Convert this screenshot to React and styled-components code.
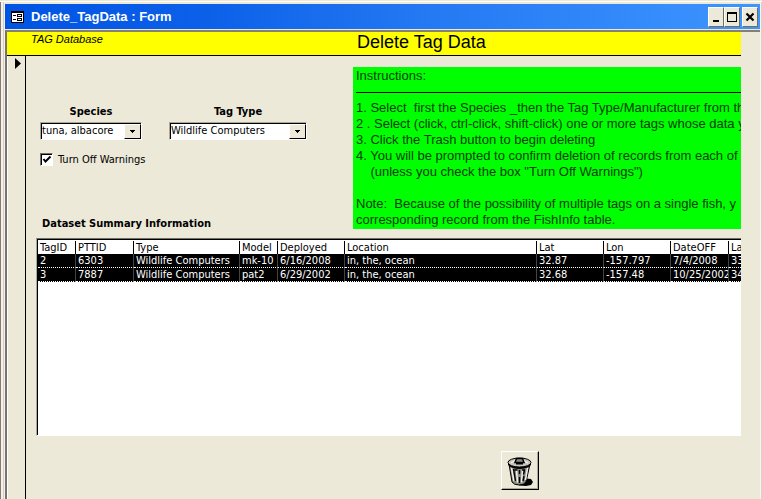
import React, { useState } from "react";
import styled, { createGlobalStyle } from "styled-components";

const Global = createGlobalStyle`
  * { box-sizing: border-box; }
  html, body, #root { margin: 0; height: 100%; }
  body { background: #ece9d8; overflow: hidden; }
`;

const ui = `"DejaVu Sans Condensed", "DejaVu Sans", sans-serif`;

const Window = styled.main`
  height: 100vh;
  display: flex;
  flex-direction: column;
  padding: 3px 2px 0 5px;
  background: linear-gradient(90deg, #857a6e 1px, #f6f0ea 1px 3px, #d6cdc2 3px 4px, #f4f1e8 4px 5px, #ece9d8 5px);
  border-top: 1px solid #ece9d8;
  box-shadow: inset 0 1px #fffdf6, inset -1px 0 #d8d3c4, inset -2px 0 #f6f4ec;
  color: #000;
  font: 11px/13px ${ui};
`;

const TitleBar = styled.header`
  display: flex;
  align-items: center;
  height: 25px;
  flex: none;
  padding: 0 2px 0 6px;
  background: linear-gradient(90deg, #0054e3, #0b5fe8 25%, #2478f2 55%, #3d95ff);
`;

const WindowTitle = styled.h1`
  margin: 0 auto 0 7px;
  font: bold 13px/16px "Liberation Sans", sans-serif;
  color: #fff;
  white-space: pre;
`;

const Caption = styled.button`
  width: 16px;
  height: 20px;
  padding: 0;
  margin-left: ${(p) => (p.$apart ? "2px" : "0")};
  border: 1px solid;
  border-color: #fff #716f64 #716f64 #fff;
  background: #ece9d8;
  display: grid;
  place-items: center;
`;

const Client = styled.section`
  flex: 1;
  display: flex;
  flex-direction: column;
  min-height: 0;
  margin-top: 1px;
  padding-right: 19px;
  border-top: 2px solid #858073;
  border-left: 2px solid #76746a;
  background: #ece9d8;
`;

const FormHeader = styled.header`
  display: grid;
  grid-template-columns: 326px 1fr;
  height: 24px;
  flex: none;
  padding-left: 24px;
  background: #ff0;
  border-bottom: 1px solid #000;
`;

const Brand = styled.span`
  font: italic 11px/15px "Liberation Sans", sans-serif;
`;

const FormTitle = styled.h2`
  margin: 0;
  font: 18px/21px "Liberation Sans", sans-serif;
`;

const Record = styled.div`
  flex: 1;
  display: flex;
  min-height: 0;
`;

const Selector = styled.div`
  width: 19px;
  flex: none;
  border-right: 1px solid #000;
  border-left: 1px solid #fff;
  padding: 2px 0 0 7px;
`;

const Detail = styled.div`
  flex: 1;
  min-width: 0;
  padding: 11px 0 0 11px;
`;

const Top = styled.div`
  display: grid;
  grid-template-columns: 316px minmax(0, 1fr);
  height: 171px;
`;

const Controls = styled.div`
  padding: 38px 0 0 3px;
`;

const Fields = styled.div`
  display: flex;
  gap: 27px;
`;

const Field = styled.label`
  display: grid;
  gap: 4px;
  width: ${(p) => p.$width};
  font-weight: bold;
  text-align: center;
`;

const Combo = styled.span`
  display: grid;
  grid-template-columns: minmax(0, 1fr) 17px;
  height: 18px;
  border: 1px solid;
  border-color: #aca899 #fff #fff #aca899;
  background: #fff;
  box-shadow: inset 1px 1px #000;
`;

const Select = styled.select`
  grid-area: 1 / 1 / 2 / 3;
  appearance: none;
  border: 0;
  padding: 0 18px 0 1px;
  margin: 0;
  background: transparent;
  font: 11px/16px ${ui};
  color: #000;
`;

const Arrow = styled.span`
  grid-area: 1 / 2;
  display: grid;
  place-items: center;
  margin-top: 1px;
  background: #ece9d8;
  border: 1px solid;
  border-color: #fff #000 #000 #fff;
  pointer-events: none;
`;

const Check = styled.label`
  display: flex;
  align-items: center;
  gap: 5px;
  margin-top: 13px;
`;

const Box = styled.input`
  appearance: none;
  width: 13px;
  height: 13px;
  margin: 0;
  border: 1px solid;
  border-color: #716f64 #fff #fff #716f64;
  box-shadow: inset 1px 1px #000;
  background: #fff;
  &:checked {
    background: #fff url("data:image/svg+xml,%3Csvg xmlns='http://www.w3.org/2000/svg' viewBox='0 0 11 11'%3E%3Cpath d='M2.5 5l2 2.5 5-5' fill='none' stroke='%23000' stroke-width='2'/%3E%3C/svg%3E");
  }
`;

const Heading = styled.h3`
  margin: 51px 0 0 2px;
  font: bold 11px/13px ${ui};
`;

const Notice = styled.section`
  height: 162px;
  padding: 1px 0 0 3px;
  overflow: hidden;
  background: #0f0;
  color: #063c06;
  font: 13px/16px "Liberation Sans", sans-serif;
`;

const Line = styled.p`
  margin: 0;
  min-height: 16px;
  white-space: pre;
`;

const Rule = styled.hr`
  margin: 8px 0 7px;
  border: 0;
  border-top: 1px solid #000;
`;

const List = styled.div`
  height: 198px;
  margin-left: -1px;
  overflow: hidden;
  background: #fff;
  border-top: 1px solid #716f64;
  border-left: 1px solid #aca899;
  border-bottom: 1px solid #fff;
  box-shadow: inset 1px 1px #000;
  padding: 2px 0 0 1px;
`;

const Table = styled.table`
  table-layout: fixed;
  width: 100%;
  border-collapse: separate;
  border-spacing: 0;
`;

const Th = styled.th`
  width: ${(p) => p.$width};
  height: 13px;
  padding: 0 0 0 2px;
  border-right: 1px solid #000;
  font-weight: normal;
  text-align: left;
  line-height: 13px;
  overflow: hidden;
  &:last-child { border-right: 0; }
`;

const Td = styled.td`
  height: 14px;
  padding: 0 0 0 2px;
  overflow: hidden;
  background: #000;
  color: #fff;
  border-right: 1px solid #444;
  border-bottom: 1px dotted #fff;
  line-height: 13px;
  white-space: nowrap;
  &:last-child { border-right: 0; }
`;

const Footer = styled.footer`
  display: flex;
  padding: 15px 0 0 464px;
`;

const Trash = styled.button`
  width: 38px;
  height: 39px;
  padding: 0;
  display: grid;
  place-items: center;
  background: #ece9d8;
  border: 1px solid;
  border-color: #fff #000 #000 #fff;
  box-shadow: inset -1px -1px #aca899;
`;

const columns = [
  ["TagID", "38px"], ["PTTID", "58px"], ["Type", "106px"], ["Model", "38px"], ["Deployed", "67px"],
  ["Location", "192px"], ["Lat", "67px"], ["Lon", "67px"], ["DateOFF", "58px"], ["La", "auto"],
];

const rows = [
  ["2", "6303", "Wildlife Computers", "mk-10", "6/16/2008", "in, the, ocean", "32.87", "-157.797", "7/4/2008", "33"],
  ["3", "7887", "Wildlife Computers", "pat2", "6/29/2002", "in, the, ocean", "32.68", "-157.48", "10/25/2002", "34"],
];

const instructions = [
  "1. Select  first the Species _then the Tag Type/Manufacturer from th",
  "2 . Select (click, ctrl-click, shift-click) one or more tags whose data y",
  "3. Click the Trash button to begin deleting",
  "4. You will be prompted to confirm deletion of records from each of",
  "    (unless you check the box \"Turn Off Warnings\")",
  "",
  "Note:  Because of the possibility of multiple tags on a single fish, y",
  "corresponding record from the FishInfo table.",
];

function FormIcon() {
  return (
    <svg width="13" height="12" viewBox="0 0 13 12" shapeRendering="crispEdges" aria-hidden="true">
      <path fill="#000" d="M0 0h13v12H0z" />
      <path fill="#fff" d="M1 2h11v9H1z" />
      <path fill="#000" d="M2 4h3v1H2zM2 8h3v1H2zM6 3h5v3H6zM6 7h5v3H6z" />
      <path fill="#fff" d="M7 4h3v1H7zM7 8h3v1H7z" />
    </svg>
  );
}

function TrashIcon() {
  return (
    <svg width="28" height="32" viewBox="0 0 28 32" aria-hidden="true">
      <path d="M13 30.500l7-7 5 .5 2 3-2 3-5 1z" fill="#000" />
      <path d="M3 9l3 18q2 3 7 3t7-3l4-18z" fill="#8c8c86" stroke="#000" />
      <path d="M5.500 13l2.500 13M10.500 14.500l1 13M16.500 14.500l-1 13M21.500 13l-2 12" stroke="#f4f2e8" strokeWidth="1.500" />
      <path d="M7.500 14l2 12M13.500 15v4M13.500 22v6M18.500 14.500l-1 5M18 21l-1 5M8.500 15h3M16 15h3" stroke="#000" strokeWidth="1.400" fill="none" />
      <path d="M2 8v2q4 4 11.500 4T25 10V8z" fill="#000" />
      <ellipse cx="13.500" cy="7.500" rx="11.500" ry="4.500" fill="#c9c7bd" stroke="#000" />
      <path d="M5 8q3-3 8-3t9 3" fill="none" stroke="#fff" />
      <path d="M9 7.500l1.500-4h6l1.500 4z" fill="#8c8c86" stroke="#000" strokeWidth="1.500" />
      <path d="M10 8.500h7" stroke="#000" strokeWidth="2" />
    </svg>
  );
}

function ComboBox({ label, value, width }) {
  return (
    <Field $width={width}>
      {label}
      <Combo>
        <Select defaultValue={value}><option>{value}</option></Select>
        <Arrow>
          <svg width="5" height="3" viewBox="0 0 5 3" shapeRendering="crispEdges"><path d="M0 0h5v1H4v1H3v1H2V2H1V1H0z" /></svg>
        </Arrow>
      </Combo>
    </Field>
  );
}

export default function App() {
  const [quiet, setQuiet] = useState(true);
  return (
    <Window>
      <Global />
      <TitleBar>
        <FormIcon />
        <WindowTitle>Delete_TagData : Form</WindowTitle>
        <Caption aria-label="Minimize">
          <svg width="10" height="10" shapeRendering="crispEdges"><path d="M2 8h6v2H2z" /></svg>
        </Caption>
        <Caption aria-label="Maximize">
          <svg width="10" height="10" shapeRendering="crispEdges"><path fillRule="evenodd" d="M0 0h10v10H0zM1 2v7h8V2z" /></svg>
        </Caption>
        <Caption aria-label="Close" $apart>
          <svg width="10" height="10"><path d="M1.500 1.500l7 7M8.500 1.500l-7 7" stroke="#000" strokeWidth="2.200" /></svg>
        </Caption>
      </TitleBar>
      <Client>
        <FormHeader>
          <Brand>TAG Database</Brand>
          <FormTitle>Delete Tag Data</FormTitle>
        </FormHeader>
        <Record>
          <Selector>
            <svg width="6" height="11" viewBox="0 0 6 11"><path d="M0 0l6 5.500L0 11z" /></svg>
          </Selector>
          <Detail>
            <Top>
              <Controls>
                <Fields>
                  <ComboBox label="Species" value="tuna, albacore" width="102px" />
                  <ComboBox label="Tag Type" value="Wildlife Computers" width="138px" />
                </Fields>
                <Check>
                  <Box type="checkbox" checked={quiet} onChange={(e) => setQuiet(e.target.checked)} />
                  Turn Off Warnings
                </Check>
                <Heading>Dataset Summary Information</Heading>
              </Controls>
              <Notice>
                <Line>Instructions:</Line>
                <Rule />
                {instructions.map((t, i) => <Line key={i}>{t}</Line>)}
              </Notice>
            </Top>
            <List>
              <Table>
                <thead><tr>{columns.map(([name, w]) => <Th key={name} $width={w}>{name}</Th>)}</tr></thead>
                <tbody>{rows.map((r) => <tr key={r[0]}>{r.map((c, i) => <Td key={i}>{c}</Td>)}</tr>)}</tbody>
              </Table>
            </List>
            <Footer><Trash aria-label="Delete selected tag data"><TrashIcon /></Trash></Footer>
          </Detail>
        </Record>
      </Client>
    </Window>
  );
}
